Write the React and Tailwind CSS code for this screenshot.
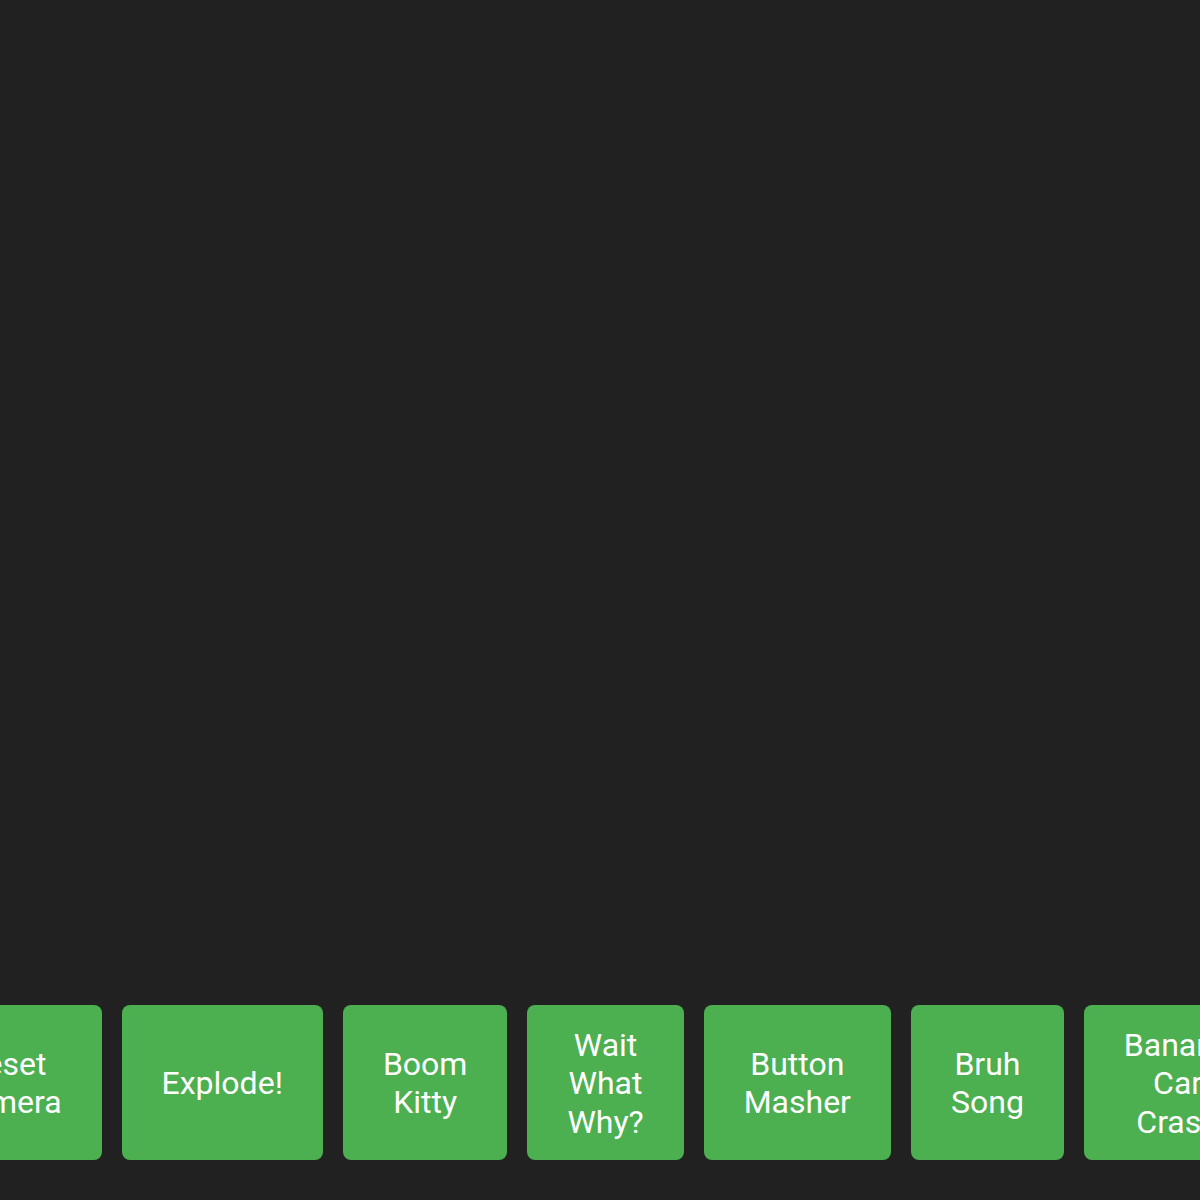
import React from 'react';

const sounds = [
  'Reset Camera',
  'Explode!',
  'Boom Kitty',
  'Wait What Why?',
  'Button Masher',
  'Bruh Song',
  'Banana Car Crash',
];

export default function App() {
  return (
    <div
      className="h-screen w-full bg-[#212121] flex flex-col justify-end pb-10 overflow-hidden"
      style={{ fontFamily: 'Roboto, "Liberation Sans", sans-serif' }}
    >
      {/* Soundboard row */}
      <div className="flex justify-center gap-5 w-full pr-[18px]">
        {sounds.map((label) => (
          <button
            key={label}
            type="button"
            className="shrink-0 w-min px-10 pt-[21px] pb-[19px] rounded-lg bg-[#4caf50] text-white text-[32px] leading-[1.2] text-center flex items-center justify-center"
          >
            {label}
          </button>
        ))}
      </div>
    </div>
  );
}
